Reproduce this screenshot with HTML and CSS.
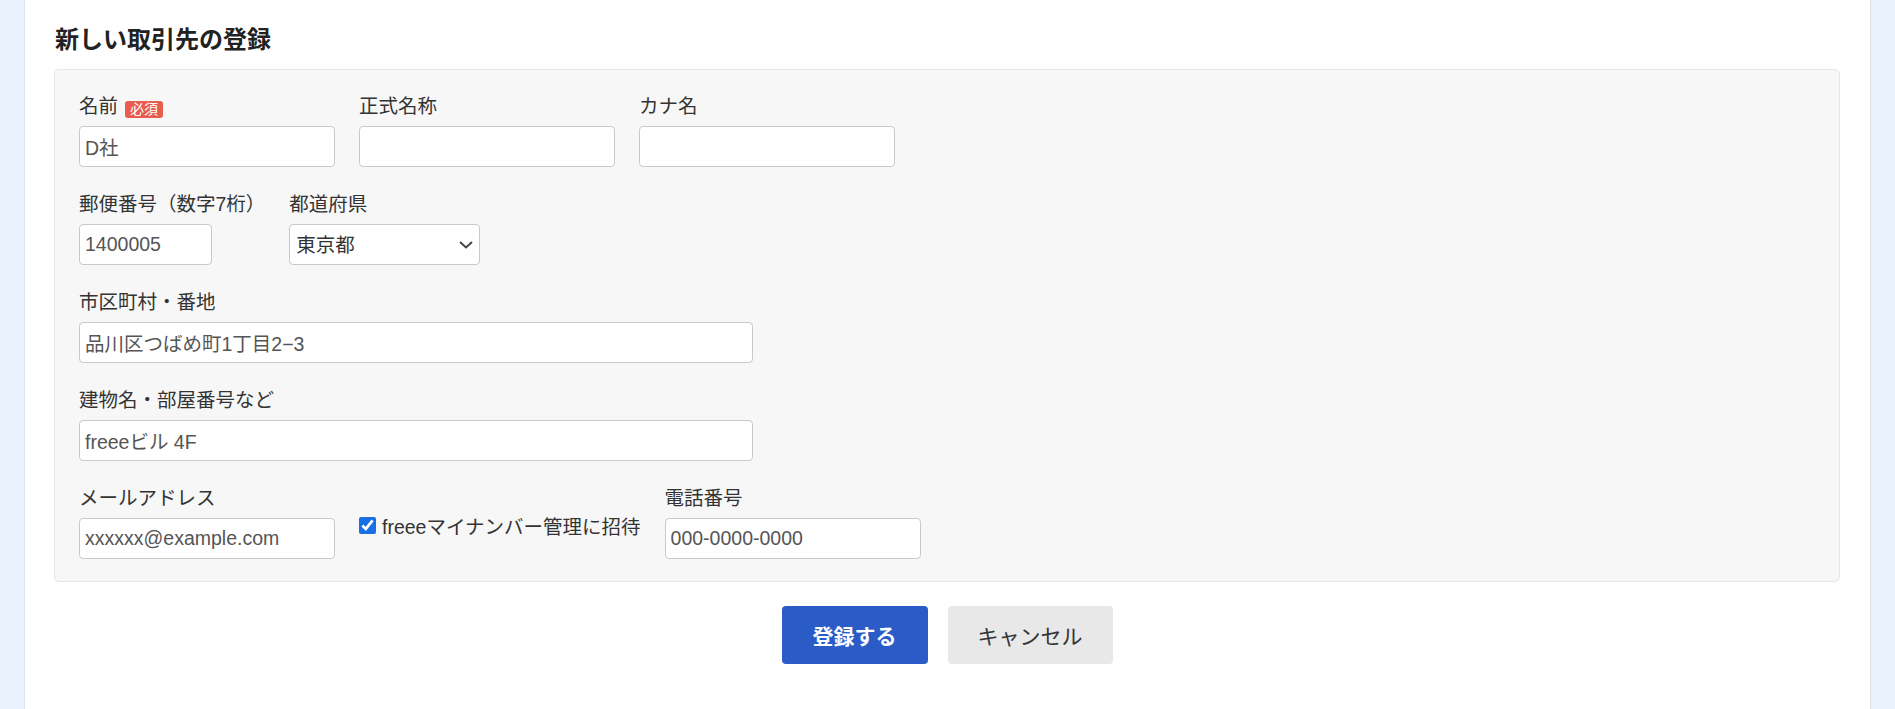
FILE: index.html
```html
<!DOCTYPE html>
<html lang="ja">
<head>
<meta charset="utf-8">
<title>新しい取引先の登録</title>
<link rel="stylesheet" href="styles.css">
</head>
<body>
<main class="card">
  <h2 class="title">新しい取引先の登録</h2>
  <form class="panel">
    <div class="row">
      <div class="field">
        <label class="label">名前<span class="badge">必須</span></label>
        <input class="input w-md" type="text" value="D社">
      </div>
      <div class="field">
        <label class="label">正式名称</label>
        <input class="input w-md" type="text" value="">
      </div>
      <div class="field">
        <label class="label">カナ名</label>
        <input class="input w-md" type="text" value="">
      </div>
    </div>
    <div class="row">
      <div class="field">
        <label class="label">郵便番号（数字7桁）</label>
        <input class="input w-sm" type="text" value="1400005">
      </div>
      <div class="field">
        <label class="label">都道府県</label>
        <div class="select-wrap">
          <select class="select">
            <option>東京都</option>
          </select>
          <svg class="chevron" width="14" height="8" viewBox="0 0 14 8"><path d="M1 1l6 5.5L13 1" fill="none" stroke="#444" stroke-width="2"/></svg>
        </div>
      </div>
    </div>
    <div class="row">
      <div class="field">
        <label class="label">市区町村・番地</label>
        <input class="input w-lg" type="text" value="品川区つばめ町1丁目2−3">
      </div>
    </div>
    <div class="row">
      <div class="field">
        <label class="label">建物名・部屋番号など</label>
        <input class="input w-lg" type="text" value="freeeビル 4F">
      </div>
    </div>
    <div class="row last">
      <div class="field">
        <label class="label">メールアドレス</label>
        <input class="input w-md" type="text" value="xxxxxx@example.com">
      </div>
      <div class="field check-field">
        <label class="check"><input class="checkbox" type="checkbox" checked><span>freeeマイナンバー管理に招待</span></label>
      </div>
      <div class="field">
        <label class="label">電話番号</label>
        <input class="input w-md" type="text" value="000-0000-0000">
      </div>
    </div>
  </form>
  <div class="actions">
    <button class="btn btn-primary" type="button">登録する</button>
    <button class="btn btn-secondary" type="button">キャンセル</button>
  </div>
</main>
</body>
</html>
```

FILE: styles.css
```css
html, body {
  margin: 0;
  padding: 0;
}
body {
  background: #e9f1fc;
  font-family: "Liberation Sans", "Noto Sans CJK JP", sans-serif;
  color: #333;
  height: 709px;
  overflow: hidden;
}
.card {
  box-sizing: border-box;
  margin-left: 24px;
  width: 1847px;
  min-height: 709px;
  background: #fff;
  border-left: 1px solid #dfe6ef;
  border-right: 1px solid #dadfe6;
  padding: 22px 30px 30px 29px;
}
.title {
  margin: 0 0 11px 1px;
  font-size: 24px;
  line-height: 36px;
  font-weight: bold;
  color: #222;
}
.panel {
  background: #f7f7f7;
  border: 1px solid #e6e6e6;
  border-radius: 5px;
  padding: 22px 24px;
}
.row {
  display: flex;
  gap: 24px;
  margin-bottom: 23px;
}
.row.last {
  margin-bottom: 0;
}
.field {
  display: flex;
  flex-direction: column;
}
.label {
  display: flex;
  align-items: center;
  gap: 7px;
  font-size: 19.5px;
  line-height: 29px;
  height: 29px;
  margin-bottom: 5px;
  color: #333;
  white-space: nowrap;
}
.badge {
  display: inline-block;
  background: #e85c50;
  color: #fff;
  font-size: 14px;
  line-height: 17px;
  height: 17px;
  padding: 0 5px;
  border-radius: 3px;
  margin-top: 6px;
}
.input, .select {
  box-sizing: border-box;
  height: 41px;
  border: 1px solid #c9c9c9;
  border-radius: 4px;
  background: #fff;
  font-family: "Liberation Sans", "Noto Sans CJK JP", sans-serif;
  font-size: 19.5px;
  color: #555;
  padding: 0 5px;
  margin: 0;
  outline: none;
}
.w-sm { width: 133px; }
.w-md { width: 256px; }
.w-lg { width: 674px; }
.select-wrap {
  position: relative;
  width: 191px;
}
.select {
  width: 191px;
  appearance: none;
  -webkit-appearance: none;
  color: #333;
  padding-left: 6px;
}
.chevron {
  position: absolute;
  right: 7px;
  top: 17px;
  pointer-events: none;
}
.check-field {
  padding-top: 29px;
}
.check {
  display: flex;
  align-items: flex-start;
  gap: 6px;
  font-size: 19.5px;
  line-height: 29px;
  color: #333;
  white-space: nowrap;
}
.checkbox {
  width: 17px;
  height: 17px;
  margin: 4px 0 0 0;
  accent-color: #1a6fe6;
}
.actions {
  display: flex;
  justify-content: center;
  gap: 20px;
  margin-top: 24px;
}
.btn {
  box-sizing: border-box;
  height: 58px;
  border: none;
  border-radius: 4px;
  font-family: "Liberation Sans", "Noto Sans CJK JP", sans-serif;
  font-size: 21px;
  padding: 0;
  cursor: pointer;
}
.btn-primary {
  width: 146px;
  background: #2a5bc7;
  color: #fff;
  font-weight: bold;
}
.btn-secondary {
  width: 165px;
  background: #e8e8e8;
  color: #333;
}
```
